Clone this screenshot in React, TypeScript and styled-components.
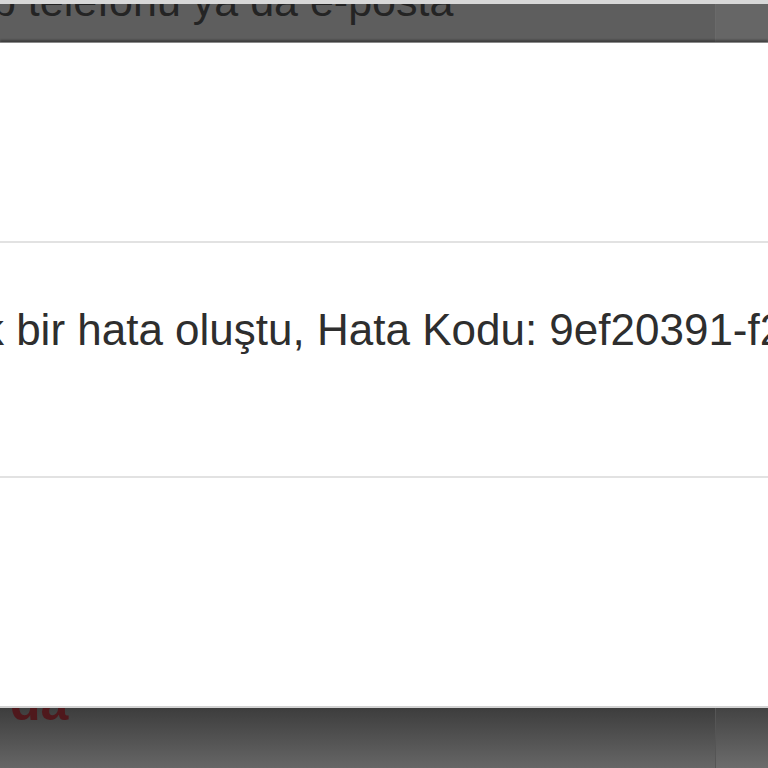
import React from "react";
import styled, { createGlobalStyle } from "styled-components";

const Global = createGlobalStyle`
  html, body { margin: 0; padding: 0; background: #5f5f5f; }
  body { font-family: "Liberation Sans", Arial, Helvetica, sans-serif; }
`;

const Screen = styled.div`
  position: relative;
  width: 768px;
  height: 768px;
  overflow: hidden;
  background: #5f5f5f;
`;

const Back = styled.div`
  display: flex;
  flex-direction: column;
  height: 100%;
`;

const TopStrip = styled.div`
  height: 4px;
  background: #d8d8d8;
`;

const FieldRow = styled.div`
  display: flex;
  height: 38px;
  background: #5e5e5e;
`;

const FieldText = styled.div`
  flex: 1;
  display: flex;
  align-items: flex-end;
  overflow: hidden;
  padding-bottom: 19px;
`;

const Placeholder = styled.span`
  margin-left: -63px;
  font-size: 43px;
  line-height: 43px;
  color: #242424;
  white-space: nowrap;
`;

const SideButton = styled.div<{ $tint: string }>`
  width: 52px;
  border-left: 1px solid #6a6a6a;
  background: ${(p) => p.$tint};
`;

const Filler = styled.div`
  flex: 1;
`;

const BottomRow = styled.div`
  display: flex;
  height: 90px;
  background: linear-gradient(#3a3a3a 0%, #3e3e3e 35%, #666666 100%);
`;

const LinkArea = styled.div`
  flex: 1;
  padding: 0 0 0 10px;
`;

const RedLink = styled.span`
  font-size: 50px;
  line-height: 50px;
  font-weight: 700;
  color: #4f181c;
`;

const BottomSide = styled.div`
  width: 52px;
  border-left: 1px solid #555555;
  background: linear-gradient(#3f3f3f 0%, #444 35%, #6c6c6c 100%);
`;

const Modal = styled.div`
  position: absolute;
  top: 43px;
  left: 0;
  right: 0;
  height: 665px;
  background: #ffffff;
  display: flex;
  flex-direction: column;
  box-shadow: 0 -1px 0 #8a8a8a, 0 -3px 2px rgba(0, 0, 0, 0.35),
    inset 0 -2px 0 #d2d2d2;
`;

const Section = styled.div<{ $h: number }>`
  height: ${(p) => p.$h}px;
  display: flex;
  flex-direction: column;
`;

const Divider = styled.div`
  height: 2px;
  background: #e2e2e2;
`;

const Message = styled.div`
  padding-top: 65px;
  margin-left: -248px;
  font-size: 44px;
  line-height: 44px;
  color: #2e2e2e;
  white-space: nowrap;
`;

export default function App() {
  return (
    <>
      <Global />
      <Screen>
        <Back>
          <TopStrip />
          <FieldRow>
            <FieldText>
              <Placeholder>Cep telefonu ya da e-posta</Placeholder>
            </FieldText>
            <SideButton $tint="#666666" />
          </FieldRow>
          <Filler />
          <BottomRow>
            <LinkArea>
              <RedLink>da</RedLink>
            </LinkArea>
            <BottomSide />
          </BottomRow>
        </Back>
        <Modal>
          <Section $h={198} />
          <Divider />
          <Section $h={233}>
            <Message>
              Beklenmedik bir hata oluştu, Hata Kodu: 9ef20391-f2a4
            </Message>
          </Section>
          <Divider />
          <Section $h={230} />
        </Modal>
      </Screen>
    </>
  );
}
